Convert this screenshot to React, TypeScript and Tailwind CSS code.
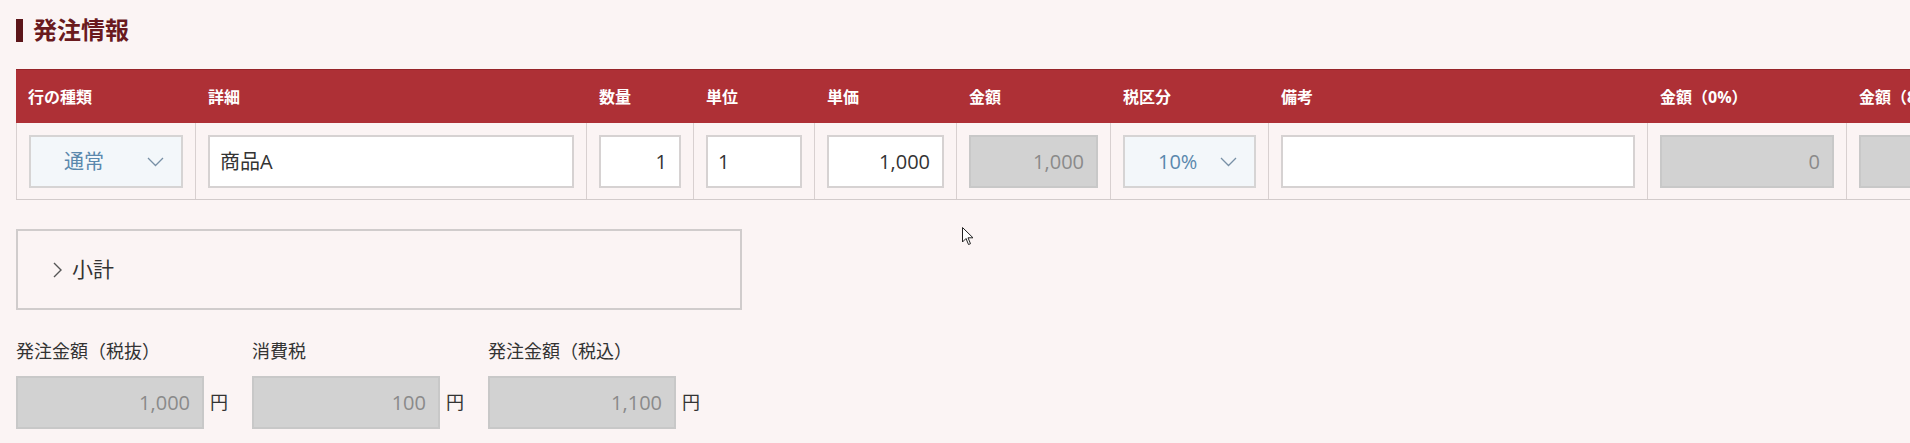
type Column = {
    label: string;
    width: string;
};

const columns: Column[] = [
    { label: '行の種類', width: 'w-[180px]' },
    { label: '詳細', width: 'w-[391px]' },
    { label: '数量', width: 'w-[107px]' },
    { label: '単位', width: 'w-[121px]' },
    { label: '単価', width: 'w-[142px]' },
    { label: '金額', width: 'w-[154px]' },
    { label: '税区分', width: 'w-[158px]' },
    { label: '備考', width: 'w-[379px]' },
    { label: '金額（0%）', width: 'w-[199px]' },
    { label: '金額（8%）', width: 'w-[199px]' },
];

const fontStack = { fontFamily: '"Open Sans", "Noto Sans CJK JP", sans-serif' };

function DownArrow() {
    return (
        <svg width="17" height="10" viewBox="0 0 17 10" className="shrink-0">
            <path d="M1 1 L8.5 8.5 L16 1" fill="none" stroke="#7890a6" strokeWidth="1.3" />
        </svg>
    );
}

function TextBox({ value = '', align = 'left' }: { value?: string; align?: 'left' | 'right' }) {
    return (
        <div
            className={`h-[53px] w-full flex items-center pl-[10px] pr-3 bg-white border-2 border-[#d6d2d2] text-[20px] text-[#333] ${
                align === 'right' ? 'justify-end' : 'justify-start'
            }`}
        >
            {value}
        </div>
    );
}

function ReadOnlyBox({ value }: { value: string }) {
    return (
        <div className="h-[53px] w-full flex items-center justify-end px-3 bg-[#d2d2d2] border-2 border-[#c8c8c8] text-[20px] text-[#8a8a8a]">
            {value}
        </div>
    );
}

function SelectBox({ value }: { value: string }) {
    return (
        <div className="h-[53px] w-full flex items-center justify-between pl-[33px] pr-[17px] bg-[#f3f7fa] border-2 border-[#d6d4d4] text-[20px] text-[#5a88ad]">
            <span>{value}</span>
            <DownArrow />
        </div>
    );
}

function TotalField({ label, value }: { label: string; value: string }) {
    return (
        <div className="flex flex-col">
            <span className="text-[18px] leading-[26px] text-[#333]">{label}</span>
            <div className="mt-3 flex items-center gap-[6px]">
                <div className="w-[188px] h-[53px] flex items-center justify-end px-3 bg-[#d2d2d2] border-2 border-[#c8c8c8] text-[20px] text-[#8a8a8a]">
                    {value}
                </div>
                <span className="text-[18px] text-[#333]">円</span>
            </div>
        </div>
    );
}

export default function App() {
    // one order line, cells in the same order as the header
    const cells = [
        <SelectBox value="通常" />,
        <TextBox value="商品A" />,
        <TextBox value="1" align="right" />,
        <TextBox value="1" />,
        <TextBox value="1,000" align="right" />,
        <ReadOnlyBox value="1,000" />,
        <SelectBox value="10%" />,
        <TextBox />,
        <ReadOnlyBox value="0" />,
        <ReadOnlyBox value="0" />,
    ];

    return (
        <div className="relative w-full h-[443px] overflow-hidden bg-[#fbf4f4] px-4 pt-[14px]" style={fontStack}>
            {/* Section title */}
            <div className="flex items-center gap-[10px]">
                <span className="w-[7px] h-[23px] bg-[#5c1519]"></span>
                <h2 className="text-[24px] leading-[32px] font-bold text-[#6a1a1e]">発注情報</h2>
            </div>

            {/* Order lines table */}
            <div className="mt-[23px] w-max">
                <div className="flex h-[54px] bg-[#ae3036] border-t border-[#962429]">
                    {columns.map((col) => (
                        <div key={col.label} className={`${col.width} shrink-0 flex items-center pl-3 text-[16px] font-bold text-white`}>
                            {col.label}
                        </div>
                    ))}
                </div>
                <div className="flex border-b border-[#d2cbcb]">
                    {columns.map((col, i) => (
                        <div
                            key={col.label}
                            className={`${col.width} shrink-0 pt-3 pb-[11px] px-3 border-r border-[#d8d0d0] ${i === 0 ? 'border-l' : ''}`}
                        >
                            {cells[i]}
                        </div>
                    ))}
                </div>
            </div>

            {/* Subtotal accordion */}
            <div className="mt-[29px] w-[726px] h-[81px] flex items-center gap-[10px] pl-[35px] border-2 border-[#d0cccc]">
                <svg width="9" height="16" viewBox="0 0 9 16">
                    <path d="M1 1 L8 8 L1 15" fill="none" stroke="#555" strokeWidth="1.4" />
                </svg>
                <span className="text-[21px] text-[#333]">小計</span>
            </div>

            {/* Totals */}
            <div className="mt-[28px] flex gap-[24px]">
                <TotalField label="発注金額（税抜）" value="1,000" />
                <TotalField label="消費税" value="100" />
                <TotalField label="発注金額（税込）" value="1,100" />
            </div>

            {/* Mouse pointer */}
            <svg className="absolute left-[962px] top-[227px]" width="12" height="19" viewBox="0 0 12 19">
                <path d="M0.5 0.5 L0.5 15 L4 11.5 L6.5 17.5 L8.5 16.7 L6 10.8 L11 10.8 Z" fill="white" stroke="#222" strokeWidth="1" />
            </svg>
        </div>
    );
}
